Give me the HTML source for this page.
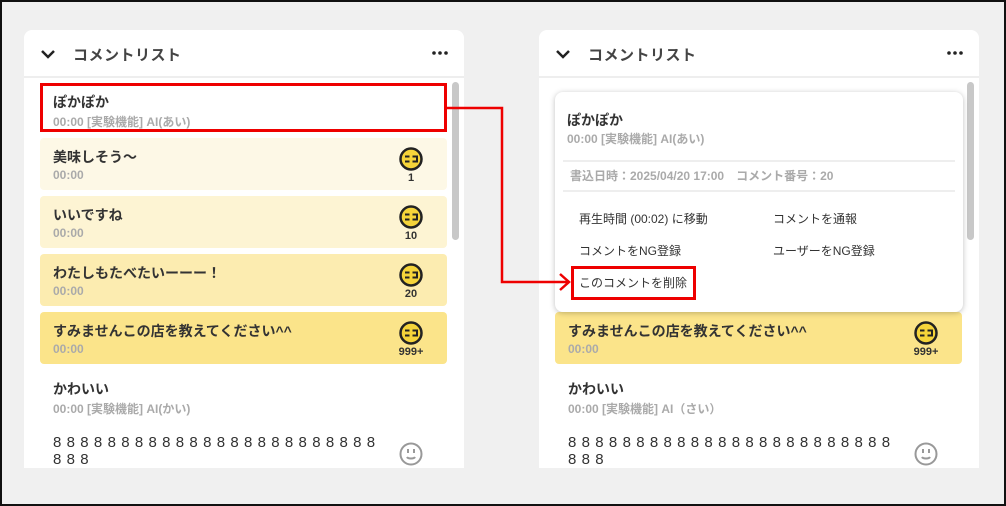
<!DOCTYPE html>
<html><head><meta charset="utf-8"><style>
*{margin:0;padding:0;box-sizing:border-box}
body{width:1006px;height:506px;overflow:hidden;background:#f0f0f0;font-family:"Liberation Sans","Noto Sans CJK JP",sans-serif;position:relative;color:#333}
.frame{position:absolute;left:0;top:0;width:1006px;height:506px;border:2px solid #111;pointer-events:none;z-index:20}
.panel{position:absolute;top:30px;width:440px;height:438px;background:#fff;border-radius:8px 8px 0 0;overflow:hidden}
.hdr{height:48px;border-bottom:2px solid #eee;position:relative}
.hdr .t{position:absolute;left:49px;top:14px;font-size:15px;font-weight:bold;color:#444;letter-spacing:0.5px}
.hdr .dots{position:absolute;right:16px;top:21px}
.sb{position:absolute;left:428px;top:52px;width:7px;height:158px;background:#c8c8c8;border-radius:4px}
.it{position:absolute;left:16px;width:407px;height:52px;border-radius:4px}
.it .a{position:absolute;left:13px;top:9px;font-size:14px;font-weight:bold;color:#333}
.it .b{position:absolute;left:13px;top:30px;font-size:12px;font-weight:bold;color:#aaa}
.ic{position:absolute;right:24px;top:9px;width:24px;height:24px}
.n{position:absolute;right:24px;top:34px;width:24px;text-align:center;font-size:11px;font-weight:bold;color:#333}
.n.w{right:17px;width:38px}
.e{position:absolute;left:13px;top:6px;font-size:15px;letter-spacing:5.3px;line-height:17px;color:#333;white-space:nowrap}
.pop{position:absolute;left:16px;top:62px;width:408px;height:220px;background:#fff;border-radius:8px;box-shadow:0 1px 6px rgba(0,0,0,.25)}
.pop .l{position:absolute;left:8px;right:8px;height:2px;background:#eee}
.m{position:absolute;font-size:12px;color:#333}
.red{position:absolute;border:3px solid #e00;z-index:10}
</style></head><body>
<svg width="0" height="0" style="position:absolute"><defs>
<symbol id="y" viewBox="0 0 24 24"><circle cx="12" cy="12" r="10.5" fill="#f5d43a" stroke="#222" stroke-width="2.5"/><path d="M6 9.5h4.5M6 14.5h4.5M13.5 9.5h4.5v5h-4.5" stroke="#222" stroke-width="2" fill="none"/></symbol>
<symbol id="g" viewBox="0 0 24 24"><circle cx="12" cy="12" r="10.5" fill="#fff" stroke="#999" stroke-width="2"/><path d="M9 7v4M15 7v4M8 15c1 2 7 2 8 0" stroke="#999" stroke-width="2" fill="none"/></symbol>
<symbol id="d" viewBox="0 0 16 4"><circle cx="2" cy="2" r="1.8" fill="#222"/><circle cx="8" cy="2" r="1.8" fill="#222"/><circle cx="14" cy="2" r="1.8" fill="#222"/></symbol>
</defs></svg>
<div class="panel" style="left:24px">
 <div class="hdr"><svg style="position:absolute;left:16px;top:19px" width="16" height="10"><path d="M2 2 L8 8 L14 2" stroke="#222" stroke-width="2.5" fill="none"/></svg><div class="t">コメントリスト</div><svg class="dots" width="16" height="4"><use href="#d"/></svg></div>
 <div class="sb"></div>
 <div class="it" style="top:53px;height:48px"><div class="a">ぽかぽか</div><div class="b">00:00 [実験機能] AI(あい)</div></div>
 <div class="it" style="top:108px;background:#fdf8e6"><div class="a">美味しそう〜</div><div class="b">00:00</div><svg class="ic"><use href="#y"/></svg><div class="n">1</div></div>
 <div class="it" style="top:166px;background:#fdf4d3"><div class="a">いいですね</div><div class="b">00:00</div><svg class="ic"><use href="#y"/></svg><div class="n">10</div></div>
 <div class="it" style="top:224px;background:#fcecb0"><div class="a">わたしもたべたいーーー！</div><div class="b">00:00</div><svg class="ic"><use href="#y"/></svg><div class="n">20</div></div>
 <div class="it" style="top:282px;background:#fbe48a"><div class="a">すみませんこの店を教えてください^^</div><div class="b">00:00</div><svg class="ic"><use href="#y"/></svg><div class="n w">999+</div></div>
 <div class="it" style="top:340px"><div class="a">かわいい</div><div class="b">00:00 [実験機能] AI(かい)</div></div>
 <div class="it" style="top:398px;height:60px"><div class="e">888888888888888888888888<br>888</div><svg class="ic" style="top:14px"><use href="#g"/></svg></div>
</div>
<div class="panel" style="left:539px">
 <div class="hdr"><svg style="position:absolute;left:16px;top:19px" width="16" height="10"><path d="M2 2 L8 8 L14 2" stroke="#222" stroke-width="2.5" fill="none"/></svg><div class="t">コメントリスト</div><svg class="dots" width="16" height="4"><use href="#d"/></svg></div>
 <div class="sb"></div>
 <div class="it" style="top:282px;background:#fbe48a"><div class="a">すみませんこの店を教えてください^^</div><div class="b">00:00</div><svg class="ic"><use href="#y"/></svg><div class="n w">999+</div></div>
 <div class="it" style="top:340px"><div class="a">かわいい</div><div class="b">00:00 [実験機能] AI（さい）</div></div>
 <div class="it" style="top:398px;height:60px"><div class="e">888888888888888888888888<br>888</div><svg class="ic" style="top:14px"><use href="#g"/></svg></div>
 <div class="pop">
  <div class="m" style="left:12px;top:18px;font-size:14px;font-weight:bold">ぽかぽか</div>
  <div class="m" style="left:12px;top:38px;font-weight:bold;color:#aaa">00:00 [実験機能] AI(あい)</div>
  <div class="l" style="top:68px"></div>
  <div class="m" style="left:15px;top:75px;font-weight:bold;color:#aaa">書込日時：2025/04/20 17:00　コメント番号：20</div>
  <div class="l" style="top:98px"></div>
  <div class="m" style="left:24px;top:118px">再生時間 (00:02) に移動</div>
  <div class="m" style="left:218px;top:118px">コメントを通報</div>
  <div class="m" style="left:24px;top:150px">コメントをNG登録</div>
  <div class="m" style="left:218px;top:150px">ユーザーをNG登録</div>
  <div class="m" style="left:24px;top:182px">このコメントを削除</div>
 </div>
</div>
<div class="red" style="left:40px;top:83px;width:407px;height:49px"></div>
<div class="red" style="left:571px;top:266px;width:125px;height:34px"></div>
<svg style="position:absolute;left:0;top:0;z-index:11" width="1006" height="506"><path d="M447 108 H502 V282 H569 M560 274 L569 282 L560 290" stroke="#e00" stroke-width="2.5" fill="none"/></svg>
<div class="frame"></div>
</body></html>
